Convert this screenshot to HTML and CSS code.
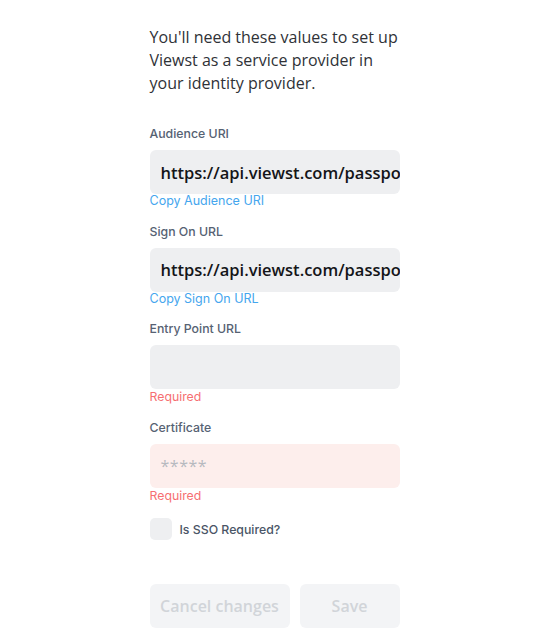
FILE: index.html
```html
<!DOCTYPE html>
<html>
<head>
<meta charset="utf-8">
<link rel="stylesheet" href="styles.css">
</head>
<body>
<div class="page">
  <form class="form">
    <p class="intro">You'll need these values to set up Viewst as a service provider in your identity provider.</p>

    <div class="field">
      <label class="label">Audience URI</label>
      <div class="input"><span class="value">https://api.viewst.com/passport/saml/metadata</span></div>
      <a class="link">Copy Audience URI</a>
    </div>

    <div class="field">
      <label class="label">Sign On URL</label>
      <div class="input"><span class="value">https://api.viewst.com/passport/saml/callback</span></div>
      <a class="link">Copy Sign On URL</a>
    </div>

    <div class="field">
      <label class="label">Entry Point URL</label>
      <div class="input"></div>
      <span class="error">Required</span>
    </div>

    <div class="field">
      <label class="label">Certificate</label>
      <div class="input input-error"><span class="placeholder">*****</span></div>
      <span class="error">Required</span>
    </div>

    <div class="check">
      <span class="box"></span>
      <span class="check-label">Is SSO Required?</span>
    </div>

    <div class="actions">
      <button type="button" class="btn btn-cancel">Cancel changes</button>
      <button type="button" class="btn btn-save">Save</button>
    </div>
  </form>
</div>
</body>
</html>
```

FILE: styles.css
```css
html, body {
  margin: 0;
  padding: 0;
  background: #ffffff;
}

.page {
  display: flex;
  justify-content: center;
  padding-left: 2px;
}

.form {
  width: 250px;
  display: flex;
  flex-direction: column;
  padding-top: 26px;
}

.intro {
  margin: 0 0 31px 0;
  font-family: "Open Sans", sans-serif;
  font-size: 16px;
  line-height: 23px;
  color: #2f3237;
  width: 260px;
}

.field {
  display: flex;
  flex-direction: column;
  margin-bottom: 14px;
}

.label {
  font-family: Inter, sans-serif;
  font-size: 12.3px;
  font-weight: 500;
  color: #566273;
  line-height: 16px;
  margin-bottom: 8px;
}

.input {
  height: 44px;
  box-sizing: border-box;
  background: #eeeff1;
  border-radius: 6px;
  padding: 0 11px;
  display: flex;
  align-items: center;
  overflow: hidden;
  white-space: nowrap;
}

.input-error {
  background: #fdeeec;
}

.value {
  font-family: "Open Sans", sans-serif;
  font-size: 16.5px;
  font-weight: 600;
  color: #141518;
}

.placeholder {
  font-family: "Open Sans", sans-serif;
  font-size: 16px;
  color: #b6b9bf;
  letter-spacing: 0.5px;
}

.link {
  font-family: Inter, sans-serif;
  font-size: 12.5px;
  color: #45a6ee;
  line-height: 14px;
  margin-bottom: 1.5px;
}

.error {
  font-family: Inter, sans-serif;
  font-size: 12.3px;
  color: #f66f72;
  line-height: 17px;
  margin-top: -1px;
  margin-bottom: 1px;
}

.check {
  display: flex;
  align-items: center;
  gap: 8px;
  margin-top: -1px;
}

.box {
  width: 22px;
  height: 22px;
  border-radius: 5px;
  background: #eeeff1;
}

.check-label {
  font-family: Inter, sans-serif;
  font-size: 12.3px;
  font-weight: 500;
  color: #4a5566;
}

.actions {
  display: flex;
  gap: 10px;
  margin-top: 44px;
}

.btn {
  height: 44px;
  border: none;
  border-radius: 6px;
  background: #f3f4f6;
  color: #d1d4d9;
  font-family: "Open Sans", sans-serif;
  font-size: 16px;
  font-weight: 600;
  padding: 0;
}

.btn-cancel {
  width: 140px;
}

.btn-save {
  width: 100px;
}
```
